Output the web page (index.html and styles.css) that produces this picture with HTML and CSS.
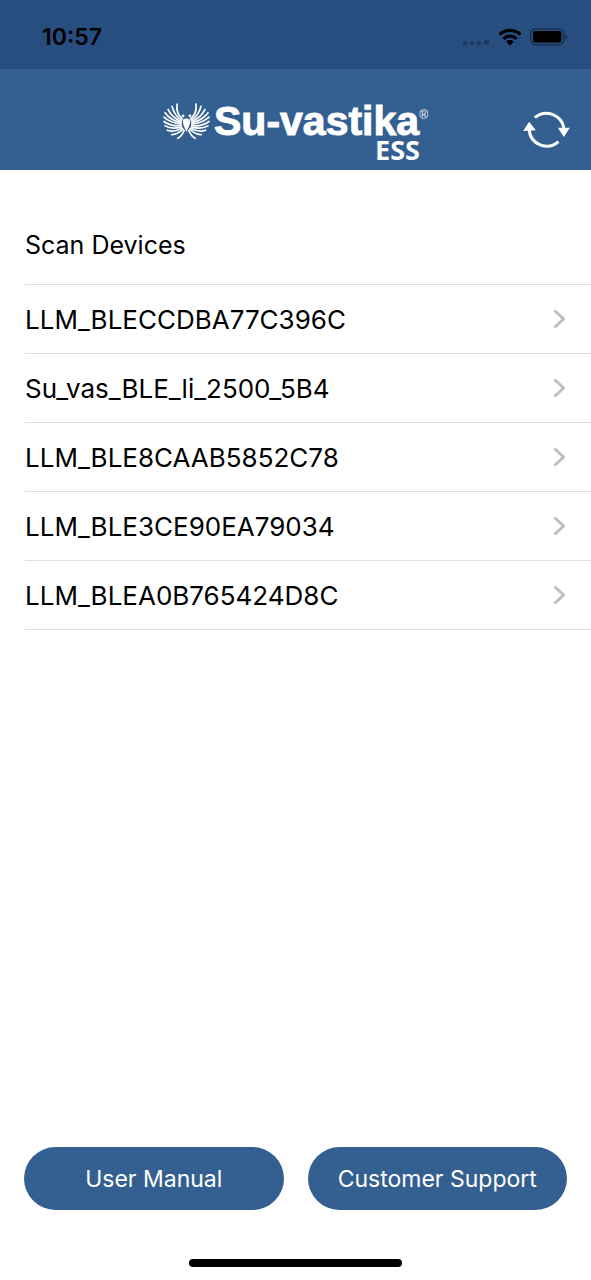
FILE: index.html
```html
<!DOCTYPE html>
<html lang="en">
<head>
    <meta charset="UTF-8">
    <meta name="viewport" content="width=device-width, initial-scale=1.0">
    <title>Su-vastika ESS</title>
    <link rel="stylesheet" href="styles.css">
</head>
<body>
    <div class="status-bar">
        <span class="time">10:57</span>
        <div class="status-icons">
            <svg class="signal" viewBox="0 0 28 6" width="28" height="6">
                <rect x="1" y="1" width="4" height="4" rx="1"/>
                <rect x="8" y="1" width="4" height="4" rx="1"/>
                <rect x="15" y="1" width="4" height="4" rx="1"/>
                <rect x="22" y="0" width="5" height="5" rx="1"/>
            </svg>
            <svg class="wifi" viewBox="0 0 24 18" width="24" height="18">
                <path d="M1.6 6.6a15 15 0 0 1 20.8 0M5.4 10.8a9.6 9.6 0 0 1 13.2 0" fill="none" stroke="#000" stroke-width="3.2"/>
                <path d="M8.2 13.6a5.6 5.6 0 0 1 7.6 0L12 17.6z"/>
            </svg>
            <svg class="battery" viewBox="0 0 38 18" width="38" height="18">
                <rect x="0.8" y="0.8" width="33" height="16" rx="5" fill="none" stroke="#152a47" stroke-width="1.3"/>
                <rect x="3" y="3" width="28.5" height="11.6" rx="2.6"/>
                <path d="M35.4 6.2c2.4 1 2.4 4.4 0 5.4z" fill="#152a47"/>
            </svg>
        </div>
    </div>

    <header class="navbar">
        <div class="brand">
            <svg class="emblem" viewBox="0 0 140 110" width="47" height="37">
                <defs>
                    <g id="wing" fill="none" stroke="#fff" stroke-width="5" stroke-linecap="round">
                        <path d="M58 47C46 37 39 20 42 3"/>
                        <path d="M56 51C43 43 31 28 27 10"/>
                        <path d="M54 55C40 49 23 36 15 19"/>
                        <path d="M54 59C38 55 17 45 6 29"/>
                        <path d="M54 63C38 61 17 55 3 42"/>
                        <path d="M54 67C40 69 18 66 3 55"/>
                        <path d="M55 71C42 75 22 77 6 68"/>
                        <path d="M57 75C46 81 30 87 13 81"/>
                        <path d="M60 78C50 86 42 94 26 94"/>
                        <path d="M63 82C59 91 54 100 44 105"/>
                    </g>
                </defs>
                <use href="#wing"/>
                <use href="#wing" transform="translate(140 0) scale(-1 1)"/>
                <path d="M60 50l7-4h6l7 4c2 10-2 19-5 25l-5 11-5-11c-3-6-7-15-5-25z" fill="#fff"/>
                <circle cx="60" cy="38" r="4" fill="#fff"/>
                <circle cx="80" cy="38" r="4" fill="#fff"/>
            </svg>
            <div class="brand-text">
                <div class="brand-name">Su-vastika<sup>®</sup></div>
                <div class="brand-sub">ESS</div>
            </div>
        </div>
        <button class="refresh" aria-label="Refresh">
            <svg viewBox="0 0 140 120" width="47" height="40">
                <path d="M35 26A53 53 0 0 1 122 57M18 63A53 53 0 0 0 106 98" fill="none" stroke="#fff" stroke-width="9"/>
                <path d="M104 56h36l-18 28zM0 66l18-28 20 26z" fill="#fff"/>
            </svg>
        </button>
    </header>

    <main>
        <h1>Scan Devices</h1>
        <ul class="devices">
            <li><a href="#">LLM_BLECCDBA77C396C <svg viewBox="0 0 12 20" width="12" height="20"><path d="M1.5 1.5l9 8.500-9 8.500"/></svg></a></li>
            <li><a href="#">Su_vas_BLE_li_2500_5B4 <svg viewBox="0 0 12 20" width="12" height="20"><path d="M1.5 1.5l9 8.500-9 8.500"/></svg></a></li>
            <li><a href="#">LLM_BLE8CAAB5852C78 <svg viewBox="0 0 12 20" width="12" height="20"><path d="M1.5 1.5l9 8.500-9 8.500"/></svg></a></li>
            <li><a href="#">LLM_BLE3CE90EA79034 <svg viewBox="0 0 12 20" width="12" height="20"><path d="M1.5 1.5l9 8.500-9 8.500"/></svg></a></li>
            <li><a href="#">LLM_BLEA0B765424D8C <svg viewBox="0 0 12 20" width="12" height="20"><path d="M1.5 1.5l9 8.500-9 8.500"/></svg></a></li>
        </ul>
    </main>

    <footer>
        <div class="actions">
            <button>User Manual</button>
            <button>Customer Support</button>
        </div>
        <div class="home-bar"></div>
    </footer>
</body>
</html>
```
FILE: styles.css
```css
* {
    box-sizing: border-box;
}

body {
    margin: 0;
    min-height: 100vh;
    display: flex;
    flex-direction: column;
    background-color: white;
    color: #000;
    font-family: Inter, "Liberation Sans", sans-serif;
}

button {
    border: none;
    cursor: pointer;
    font-family: inherit;
}

svg {
    display: block;
}

.status-bar {
    display: flex;
    justify-content: space-between;
    align-items: center;
    height: 69px;
    padding: 4px 23px 0 42px;
    background-color: #284e80;
}

.time {
    font-size: 23px;
    font-weight: 600;
}

.status-icons {
    display: flex;
    align-items: center;
    gap: 8px;
}

.signal {
    margin-top: 12px;
    fill: #1c3963;
}

.navbar {
    display: grid;
    grid-template-columns: 1fr auto 1fr;
    align-items: start;
    height: 101px;
    padding: 32px 21px 0;
    background-color: #335f91;
}

.brand {
    grid-column: 2;
    display: flex;
    align-items: flex-start;
    gap: 4px;
    color: white;
}

.emblem {
    margin-top: 2px;
}

.brand-name {
    font-family: "Liberation Sans", Arial, sans-serif;
    font-size: 41px;
    font-weight: bold;
    line-height: 40px;
    -webkit-text-stroke: 1px white;
}

.brand-name sup {
    font-size: 12px;
    font-weight: normal;
    line-height: 12px;
    vertical-align: 16px;
    -webkit-text-stroke: 0;
}

.brand-sub {
    padding-right: 8px;
    font-family: "Open Sans", sans-serif;
    font-size: 27px;
    font-weight: bold;
    line-height: 18px;
    text-align: right;
}

.refresh {
    justify-self: end;
    padding: 8px 0 0;
    background: none;
}

main {
    flex: 1;
    padding-left: 25px;
}

h1 {
    margin: 0;
    padding: 59px 0 23px;
    font-size: 25px;
    font-weight: normal;
    line-height: 32px;
}

.devices {
    margin: 0;
    padding: 0;
    list-style: none;
    border-top: 1px solid #dedede;
}

.devices a {
    display: flex;
    justify-content: space-between;
    align-items: center;
    height: 69px;
    padding-right: 26px;
    border-bottom: 1px solid #dedede;
    color: #000;
    font-size: 26px;
    text-decoration: none;
}

.devices path {
    fill: none;
    stroke: #bfbfbf;
    stroke-width: 3;
}

.actions {
    display: flex;
    gap: 24px;
    padding: 0 24px;
}

.actions button {
    flex: 1;
    height: 63px;
    padding: 0;
    border-radius: 32px;
    background-color: #335f91;
    color: white;
    font-size: 23px;
}

.home-bar {
    width: 36%;
    height: 8px;
    margin: 49px auto 13px;
    border-radius: 4px;
    background-color: #000;
}
```
